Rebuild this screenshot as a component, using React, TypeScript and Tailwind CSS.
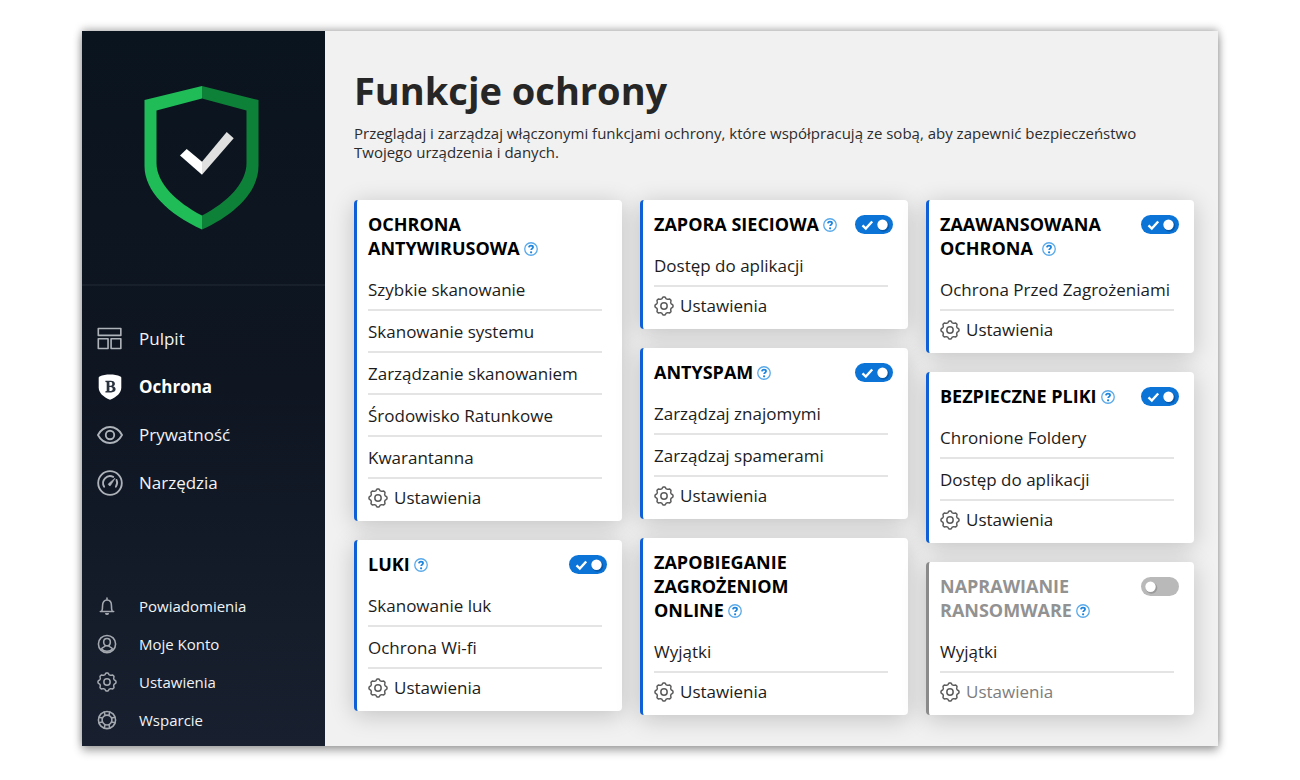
import { useState, type ReactNode } from "react";

const scallop = (radius: number, depth: number) =>
  Array.from({ length: 96 }, (_, i) => {
    const a = (i / 96) * Math.PI * 2;
    const r = radius + depth * Math.tanh(1.6 * Math.cos(8 * a));
    return `${i ? "L" : "M"}${(12 + r * Math.cos(a)).toFixed(2)} ${(12 + r * Math.sin(a)).toFixed(2)}`;
  }).join("") + "Z";

const GEAR = scallop(9.9, 1);

function Icon({ className, children, width = 1.6 }: { className: string; children: ReactNode; width?: number }) {
  return (
    <svg
      className={className}
      viewBox="0 0 24 24"
      fill="none"
      stroke="currentColor"
      strokeWidth={width}
      strokeLinejoin="round"
      strokeLinecap="round"
      aria-hidden="true"
    >
      {children}
    </svg>
  );
}

function Gear({ className }: { className: string }) {
  return (
    <Icon className={className} width={1.8}>
      <path d={GEAR} />
      <circle cx="12" cy="12" r="3.8" />
    </Icon>
  );
}

const mainNav = [
  {
    label: "Pulpit",
    icon: (
      <Icon className="size-[26px]" width={1.5}>
        <rect x="1.2" y="2.3" width="20.8" height="6.4" />
        <rect x="1.2" y="11.8" width="9" height="9" />
        <rect x="13" y="11.8" width="9" height="9" />
      </Icon>
    ),
  },
  {
    label: "Ochrona",
    active: true,
    icon: (
      <svg className="size-[26px]" viewBox="0 0 26 26" aria-hidden="true">
        <path
          d="M13 .6c3.7 0 7.4.6 10.4 1.8.6.3.9.7.9 1.3v9.500c0 6-4.600 9.500-11.300 12.600C6.300 22.700 1.700 19.200 1.700 13.200V3.700c0-.6.300-1 .9-1.300C5.600 1.200 9.300.6 13 .6z"
          fill="#fff"
        />
        <path
          d="M8.400 6.800h5.400c2.500 0 4.100 1 4.100 2.900 0 1.300-.8 2.200-2.200 2.500 1.800.3 2.900 1.300 2.900 2.900 0 2.100-1.600 3.300-4.400 3.300H8.400v-1.200l1.300-.3V8.300l-1.300-.3zm4 1.300v3.600h1c1.200 0 1.900-.6 1.900-1.800 0-1.200-.6-1.800-1.800-1.800zm0 4.900v4.100h1.200c1.400 0 2.100-.7 2.100-2 0-1.400-.8-2.100-2.200-2.100z"
          fill="#2a323e"
          fillRule="evenodd"
        />
      </svg>
    ),
  },
  {
    label: "Prywatność",
    icon: (
      <Icon className="size-[26px]" width={1.7}>
        <path d="M.9 12C3.300 7.500 7.200 4.600 12 4.600S20.700 7.500 23.100 12C20.700 16.500 16.800 19.400 12 19.400S3.300 16.500.9 12z" />
        <circle cx="12" cy="12" r="3.900" />
      </Icon>
    ),
  },
  {
    label: "Narzędzia",
    icon: (
      <Icon className="size-[26px]" width={1.7}>
        <circle cx="12" cy="12" r="10.900" />
        <path d="M6.600 15.500A6.500 6.500 0 0 1 15 6.300M18 9.200a6.500 6.500 0 0 1-.6 6.300" />
        <path d="M16.500 7.800 12.900 13.600a1.200 1.200 0 1 1-1.900-1.300z" fill="currentColor" strokeWidth=".6" />
      </Icon>
    ),
  },
];

const footerNav = [
  {
    label: "Powiadomienia",
    icon: (
      <Icon className="size-5" width={1.9}>
        <path d="M4 18.500h16M5.700 18.500c.8-1.700 1-3.500 1-7.300 0-3.900 2.100-6.500 5.300-6.500s5.300 2.600 5.300 6.500c0 3.800.2 5.600 1 7.300" />
        <path d="M12 4V2.500" />
        <path d="M10.500 21.200a1.600 1.200 0 0 0 3 0z" fill="currentColor" />
      </Icon>
    ),
  },
  {
    label: "Moje Konto",
    icon: (
      <Icon className="size-5" width={1.9}>
        <circle cx="12" cy="12" r="10.300" />
        <path d="M12 5.300c2.400 0 4 1.700 4 4.200s-1.600 4.700-4 4.700-4-2.200-4-4.700 1.600-4.200 4-4.200z" />
        <path d="M10 13.700c0 2-3.800 2-4.500 4.200 3 3.600 10 3.600 13 0-.7-2.200-4.500-2.200-4.500-4.200" />
      </Icon>
    ),
  },
  { label: "Ustawienia", icon: <Gear className="size-5" /> },
  {
    label: "Wsparcie",
    icon: (
      <Icon className="size-5" width={1.9}>
        <circle cx="12" cy="12" r="10.300" />
        <circle cx="12" cy="12" r="5.900" />
        <path d="m9.700 6.400-1-3.900M14.300 6.400l1-3.900M9.700 17.600l-1 3.900M14.300 17.600l1 3.900M6.400 9.700l-3.900-1M6.400 14.300l-3.900 1M17.600 9.700l3.900-1M17.600 14.300l3.900 1" />
      </Icon>
    ),
  },
];

type Feature = { title: string; items: string[]; enabled?: boolean };

const columns: Feature[][] = [
  [
    {
      title: "OCHRONA\nANTYWIRUSOWA",
      items: ["Szybkie skanowanie", "Skanowanie systemu", "Zarządzanie skanowaniem", "Środowisko Ratunkowe", "Kwarantanna"],
    },
    { title: "LUKI", items: ["Skanowanie luk", "Ochrona Wi-fi"], enabled: true },
  ],
  [
    { title: "ZAPORA SIECIOWA", items: ["Dostęp do aplikacji"], enabled: true },
    { title: "ANTYSPAM", items: ["Zarządzaj znajomymi", "Zarządzaj spamerami"], enabled: true },
    { title: "ZAPOBIEGANIE\nZAGROŻENIOM\nONLINE", items: ["Wyjątki"] },
  ],
  [
    { title: "ZAAWANSOWANA\nOCHRONA ", items: ["Ochrona Przed Zagrożeniami"], enabled: true },
    { title: "BEZPIECZNE PLIKI", items: ["Chronione Foldery", "Dostęp do aplikacji"], enabled: true },
    { title: "NAPRAWIANIE\nRANSOMWARE", items: ["Wyjątki"], enabled: false },
  ],
];

function Toggle({ label, checked, onChange }: { label: string; checked: boolean; onChange: (v: boolean) => void }) {
  return (
    <span className="relative mt-[3px] block h-[19px] w-[38px] shrink-0">
      <input
        type="checkbox"
        role="switch"
        aria-label={label}
        checked={checked}
        onChange={(e) => onChange(e.target.checked)}
        className="block h-[19px] w-[38px] cursor-pointer appearance-none rounded-full bg-[#b9b9b9] checked:bg-[#0b74d6]"
      />
      <svg className="pointer-events-none absolute inset-0" viewBox="0 0 38 19" aria-hidden="true">
        {checked ? (
          <>
            <path d="m7.500 10.300 3.300 3.200L17.200 6.500" fill="none" stroke="#fff" strokeWidth="2.400" />
            <circle cx="28.500" cy="11" r="5.800" fill="#0759ac" />
            <circle cx="27.500" cy="9.800" r="5.200" fill="#fff" />
          </>
        ) : (
          <>
            <circle cx="10.500" cy="11" r="5.800" fill="#9a9a9a" />
            <circle cx="9.500" cy="9.800" r="5.200" fill="#fff" />
          </>
        )}
      </svg>
    </span>
  );
}

function FeatureCard({ title, items, enabled }: Feature) {
  const [on, setOn] = useState(enabled);
  const off = on === false;
  const name = title.replace("\n", " ").trim();
  return (
    <section
      className={`rounded-[4px] border-l-[3px] bg-white pt-3 pl-[11px] shadow-[0_4px_24px_rgba(0,0,0,0.2)] ${off ? "border-[#8a8a8a]" : "border-[#0f5fd6]"}`}
    >
      <div className="mb-[9px] flex items-start justify-between pr-[15px]">
        <h2 className={`whitespace-pre text-[18px] leading-6 font-bold ${off ? "text-[#929292]" : "text-black"}`}>
          {title}
          <button type="button" aria-label={`Pomoc: ${name}`} className="ml-1 inline-block align-[-1px]">
            <svg className="block size-[14px]" viewBox="0 0 15 15" fill="none" aria-hidden="true">
              <circle cx="7.500" cy="7.500" r="6.700" stroke="#5aaaea" strokeWidth="1.400" />
              <path d="M5.300 5.700c.1-1.300 1-1.900 2.200-1.900s2.200.7 2.200 1.700c0 1.500-2 1.600-2 3.200" stroke="#1c84dc" strokeWidth="1.900" />
              <circle cx="7.600" cy="11" r="1.200" fill="#1c84dc" />
            </svg>
          </button>
        </h2>
        {on !== undefined && <Toggle label={name} checked={on} onChange={setOn} />}
      </div>
      <ul className="mr-5">
        {items.map((item) => (
          <li key={item} className="border-b-2 border-[#e4e4e4]">
            <a href="#" className="block h-10 whitespace-nowrap text-[17px] leading-[42px] text-[#1c1c1c]">
              {item}
            </a>
          </li>
        ))}
      </ul>
      <a
        href="#"
        className={`flex h-[42px] items-center gap-[6px] pb-[5px] text-[17px] ${off ? "text-[#7d7d7d]" : "text-[#1c1c1c]"}`}
      >
        <Gear className="size-5 text-[#5c5c5c]" />
        Ustawienia
      </a>
    </section>
  );
}

function Sidebar() {
  return (
    <aside className="flex w-[243px] shrink-0 flex-col bg-linear-to-b from-[#0a141e] via-[#0f1622] to-[#181f2e] text-[#f1f3f5]">
      <div className="flex h-[255px] items-start border-b-2 border-[#18212b] pt-[55px] pl-[62px]">
        <svg className="h-[144px] w-[116px]" viewBox="0 0 116 144" role="img" aria-label="Urządzenie jest chronione">
          <path d="M58 0 .5 14v66C.5 105 24 128 58 143.500V129.500C32 116 12.500 97 12.500 77V24.500L58 12.500z" fill="#1fbc58" />
          <path d="m58 0 56.500 14v66c0 25-22.500 48-56.500 63.500V129.500C84 116 102.500 97 102.500 77V24.500L58 12.500z" fill="#0e8138" />
          <path d="m36 69.500 6.700-6.500L58 75.700v13z" fill="#fff" />
          <path d="M58 75.700 82.700 46l7 6.300L58 88.700z" fill="#e0e0e0" />
        </svg>
      </div>
      <nav aria-label="Menu główne" className="pt-[29px]">
        {mainNav.map(({ label, icon, active }) => (
          <a
            key={label}
            href="#"
            aria-current={active ? "page" : undefined}
            className={`flex h-12 items-center gap-4 pl-[15px] text-[17px] ${active ? "font-bold text-white" : ""}`}
          >
            <span className="text-[#aeb3b9]">{icon}</span>
            {label}
          </a>
        ))}
      </nav>
      <nav aria-label="Konto i pomoc" className="mt-auto pb-[7px]">
        {footerNav.map(({ label, icon }) => (
          <a key={label} href="#" className="flex h-[38px] items-center gap-[22px] pl-[15px] text-[15px]">
            <span className="text-[#a4a9b0]">{icon}</span>
            {label}
          </a>
        ))}
      </nav>
    </aside>
  );
}

export default function App() {
  return (
    <div className="flex min-h-screen bg-white px-[82px] pt-[31px] pb-[34px] font-['Open_Sans','Noto_Sans',sans-serif]">
      <div className="flex grow shadow-[0_-2px_8px_rgba(0,0,0,0.28),0_5px_9px_rgba(0,0,0,0.32)]">
        <Sidebar />
        <main className="min-w-0 grow bg-[#f1f1f1] px-[29px] pt-8 pr-6 pb-[31px]">
          <h1 className="text-[38px] leading-[54px] font-bold text-[#262626]">Funkcje ochrony</h1>
          <p className="mt-[7px] max-w-[800px] text-[15px] leading-[19px] text-[#2c2c2c]">
            Przeglądaj i zarządzaj włączonymi funkcjami ochrony, które współpracują ze sobą, aby zapewnić bezpieczeństwo
            Twojego urządzenia i danych.
          </p>
          <div className="mt-[38px] grid grid-cols-3 gap-[18px]">
            {columns.map((cards, i) => (
              <div key={i} className="flex flex-col gap-[19px]">
                {cards.map((card) => (
                  <FeatureCard key={card.title} {...card} />
                ))}
              </div>
            ))}
          </div>
        </main>
      </div>
    </div>
  );
}
